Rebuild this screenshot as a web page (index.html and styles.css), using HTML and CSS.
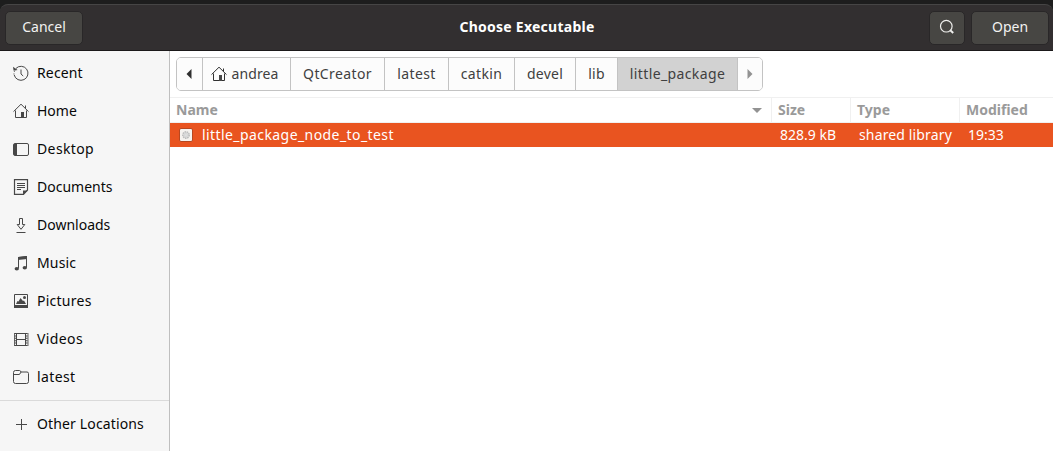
FILE: index.html
```
<!DOCTYPE html>
<html lang="en">
<head>
<meta charset="utf-8">
<title>Choose Executable</title>
<link rel="stylesheet" href="styles.css">
</head>
<body>
<div class="dialog">
  <header class="titlebar">
    <button class="btn wide">Cancel</button>
    <h1>Choose Executable</h1>
    <div class="actions">
      <button class="btn search" aria-label="Search"><svg width="16" height="16" viewBox="0 0 16 16"><circle cx="7.3" cy="7.2" r="5.8"/><path d="M11.3 11.3l2.9 2.7" stroke-width="2"/></svg></button>
      <button class="btn wide">Open</button>
    </div>
  </header>
  <div class="content">
    <nav class="sidebar">
      <a class="place"><svg class="icon" viewBox="0 0 16 16"><path d="M2.8 3.6A7 7 0 1 1 1.200 10"/><path d="M1 9.500a7 7 0 0 1 .6-3.500" stroke-dasharray="1 1.500"/><path d="M8 4.500v4.500l2.200 2"/><path class="fill" d="M0 1.800l.6 4 4-.8z"/></svg><span class="track-s">Recent</span></a>
      <a class="place"><svg class="icon" viewBox="0 0 16 16"><path d="M.5 8.600L8 1.200l7.500 7.400M2.500 7.500v7h11v-7M12.500 2.500v2.800"/><path class="fill" d="M8 9h3v6H8z"/></svg><span>Home</span></a>
      <a class="place"><svg class="icon" viewBox="0 0 16 16"><rect x=".5" y="2.500" width="15" height="12" rx="1.500"/><path class="fill" d="M1 3h3v11H1z"/></svg><span class="track-l">Desktop</span></a>
      <a class="place"><svg class="icon" viewBox="0 0 16 16"><path stroke-width="1.200" d="M1.500.600h13v10.400l-4 4.400h-9zM4 4.500h8M4 6.500h8M4 8.500h8M4 10.500h4"/><path class="fill" d="M10 15.500v-4h5z"/></svg><span>Documents</span></a>
      <a class="place"><svg class="icon" viewBox="0 0 16 16"><path d="M6.500 1.500h3v6h2.300L8 12.300 4.200 7.500h2.300zM3.500 15.500h9"/></svg><span>Downloads</span></a>
      <a class="place"><svg class="icon" viewBox="0 0 16 16"><path d="M5.500 13V2.500l8-1v11"/><path class="fill" d="M5 2l9-1v3l-9 1z"/><ellipse class="fill" cx="3.800" cy="13.800" rx="2.200" ry="1.800"/><ellipse class="fill" cx="11.800" cy="12.800" rx="2.200" ry="1.800"/></svg><span class="track-s">Music</span></a>
      <a class="place"><svg class="icon" viewBox="0 0 16 16"><path d="M1.500 1.500h13v12h-13z"/><path class="fill" d="M1 12h14v3H1zM3 11l1.500-3 1 .5L7.500 5 10 8l1-.5 2 3.500z"/><circle class="fill" cx="11.500" cy="4.500" r="1.500"/></svg><span class="track-m">Pictures</span></a>
      <a class="place"><svg class="icon" viewBox="0 0 16 16"><path d="M3.500 2v13M12.500 2v13M3 2.500h10M3 8.500h10M3 14.500h10"/><path d="M2.200 2v13M13.800 2v13" stroke-width="1.600" stroke-dasharray="1 1.400"/><path d="M1.500 2v13M15 2v13" stroke-width=".8"/></svg><span class="track-l">Videos</span></a>
      <a class="place"><svg class="icon" viewBox="0 0 16 16"><path d="M.5 12.500v-9q0-2 2-2h4q1 0 1.500 1.500h6q1.500 0 1.500 1.500v8q0 2-2 2h-11q-2 0-2-2zM.5 5.500H6q1 0 2-2.500"/></svg><span class="track-l">latest</span></a>
      <div class="rule"></div>
      <a class="place"><svg class="icon" viewBox="0 0 16 16"><path d="M8.500 3v11M3 8.500h11"/></svg><span class="track-s">Other Locations</span></a>
    </nav>
    <main class="files">
      <div class="pathbar">
        <button class="crumb arrow"><svg width="6" height="10" viewBox="0 0 6 10"><path d="M5.500 0v10L.5 5z"/></svg></button>
        <button class="crumb andrea"><svg class="icon" viewBox="0 0 16 16"><path d="M.5 8.600L8 1.200l7.500 7.400M2.500 7.500v7h11v-7M12.500 2.500v2.800"/><path class="fill" d="M8 9h3v6H8z"/></svg><span class="track-s">andrea</span></button>
        <button class="crumb creator"><span class="track-l">QtCreator</span></button>
        <button class="crumb latest"><span class="track-l">latest</span></button>
        <button class="crumb catkin"><span class="track-l">catkin</span></button>
        <button class="crumb devel"><span class="track-m">devel</span></button>
        <button class="crumb lib"><span class="track-m">lib</span></button>
        <button class="crumb current"><span class="track-l">little_package</span></button>
        <button class="crumb next"><svg width="6" height="10" viewBox="0 0 6 10"><path d="M.5 0v10l5-5z"/></svg></button>
      </div>
      <div class="row head">
        <span class="name">Name<svg width="10" height="5" viewBox="0 0 10 5"><path d="M0 0h10L5 5z"/></svg></span><span>Size</span><span>Type</span><span>Modified</span>
      </div>
      <div class="row selected">
        <span class="name"><svg width="14" height="14" viewBox="0 0 14 14"><rect x=".5" y=".5" width="13" height="13" rx="1.500" fill="#f5f2ef" stroke="#b8471f"/><circle cx="7" cy="7" r="3.200" fill="#ddd" stroke="#bbb" stroke-width="1.500" stroke-dasharray="1.500 .7"/><circle cx="7" cy="7" r="1.200" fill="#f1f1f1" stroke="#bbb" stroke-width=".5"/></svg><b class="filename">little_package_node_to_test</b></span><span class="size">828.9 kB</span><span class="type track-s">shared library</span><span class="time">19:33</span>
      </div>
    </main>
  </div>
</div>
</body>
</html>
```
FILE: styles.css
```
* { box-sizing: border-box; }
body {
  margin: 0;
  background: #1d1d1d;
  font-family: "Noto Sans", "Open Sans", sans-serif;
  font-size: 14px;
  color: #080808;
}
button { font: inherit; padding: 0; margin: 0; }
.track-s { letter-spacing: .14px; }
.track-m { letter-spacing: .25px; }
.track-l { letter-spacing: .38px; }
.dialog { width: 1053px; height: 451px; padding-top: 4px; overflow: hidden; }
.titlebar {
  height: 47px;
  display: grid;
  grid-template-columns: 1fr auto 1fr;
  align-items: center;
  padding: 0 4px 0 5px;
  background: #322f30;
  border-top: 1px solid #464545;
  border-bottom: 1px solid #1b191a;
  border-radius: 8px 8px 0 0;
  color: #fff;
}
h1 { margin: 0 0 2px; font-size: 14px; font-weight: 700; line-height: 20px; letter-spacing: .25px; }
.actions { display: flex; gap: 6px; justify-content: flex-end; }
.btn {
  height: 34px;
  display: flex;
  align-items: center;
  justify-content: center;
  padding-bottom: 2px;
  background: #474643;
  border: 1px solid #292728;
  border-radius: 5px;
  color: #f2f2f0;
}
.btn.wide { width: 78px; }
.btn.search { width: 36px; }
.btn svg { fill: none; stroke: #eeeeec; stroke-width: 1.2; }
.content { display: flex; height: 400px; background: #fff; }
.sidebar { width: 170px; padding-top: 3px; background: #f6f6f6; border-right: 1px solid #bfbfbf; }
.place { display: flex; align-items: center; gap: 8px; height: 38px; padding-left: 13px; }
.place span, .crumb span { padding-bottom: 2px; }
.icon { width: 16px; height: 16px; flex: none; fill: none; stroke: #484848; stroke-width: 1; }
.icon .fill { fill: #484848; stroke: none; }
.rule { height: 1px; background: #dadada; margin: 4px 0; }
.files { flex: 1; }
.pathbar {
  display: flex;
  width: 587px;
  height: 34px;
  margin: 6px 0 6px 6px;
  border: 1px solid #c3c3c3;
  border-radius: 5px;
  overflow: hidden;
}
.crumb {
  display: flex;
  align-items: center;
  justify-content: center;
  gap: 4px;
  border: 0;
  border-right: 1px solid #c3c3c3;
  background: #fcfcfc;
  color: #404040;
}
.crumb .icon { stroke: #303030; }
.arrow { width: 26px; padding-right: 2px; }
.arrow svg { fill: #303030; }
.andrea { width: 88px; padding-right: 3px; }
.creator { width: 94px; }
.latest { width: 64px; }
.catkin { width: 66px; }
.devel { width: 61px; }
.lib { width: 42px; }
.current { width: 120px; background: #d2d2d2; }
.next { width: 24px; border-right: 0; }
.next svg { fill: #929292; }
.row { display: grid; grid-template-columns: 602px 79px 109px 1fr; line-height: 24px; }
.row > span { padding-left: 6px; white-space: nowrap; }
.head { height: 26px; border-top: 1px solid #f0f0f0; border-bottom: 1px solid #f0f0f0; color: #9a9a9a; font-weight: 700; }
.head > span { border-right: 1px solid #f0f0f0; }
.head > span:last-child { border-right: 0; }
.name { display: flex; align-items: center; }
.head .name { justify-content: space-between; padding-right: 9px; }
.head svg { fill: #929292; }
.selected { height: 24px; background: #e95420; color: #fff; }
.selected .name { gap: 9px; padding-left: 9px; }
.filename { font-weight: 400; letter-spacing: .42px; }
.row > .size { padding-left: 8px; }
.row > .type { padding-left: 8px; }
.row > .time { padding-left: 8px; }
```
